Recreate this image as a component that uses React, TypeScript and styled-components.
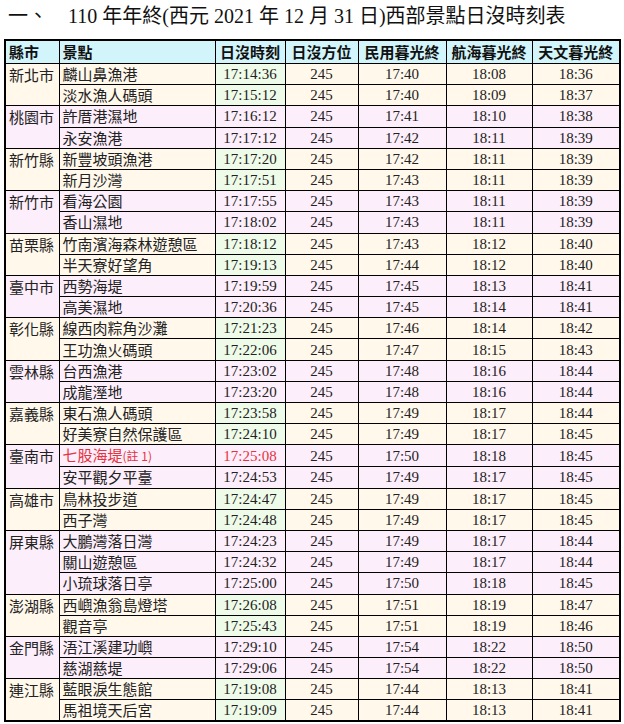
import styled, { createGlobalStyle } from "styled-components";

const GlobalStyle = createGlobalStyle`
  body {
    margin: 0;
    background: #fff;
  }
`;

const Page = styled.div`
  padding: 4px 4px 0 4px;
  width: 615px;
`;

const Title = styled.h1`
  margin: 0 0 0 4px;
  height: 35px;
  font-family: "Liberation Serif", "Noto Sans CJK TC", serif;
  font-weight: normal;
  font-size: 20px;
  line-height: 24px;
  color: #111;
  white-space: pre;
`;

const Table = styled.table`
  border-collapse: collapse;
  table-layout: fixed;
  width: 615px;
  border: 2px solid #000;
`;

const HeadCell = styled.th<{ $left?: boolean }>`
  height: 22px;
  padding: 0 3px;
  border: 1px solid #000;
  background: #d2f5fb;
  font-family: "Noto Sans CJK TC", sans-serif;
  font-size: 15px;
  line-height: 20px;
  font-weight: 700;
  color: #111;
  text-align: ${(p) => (p.$left ? "left" : "center")};
`;

const Row = styled.tr<{ $pink: boolean }>`
  height: 21.2px;
  background: ${(p) => (p.$pink ? "#fdeefb" : "#fff8eb")};
`;

const County = styled.td`
  vertical-align: top;
  padding: 0 3px;
  border: 1px solid #000;
  font-family: "Noto Sans CJK TC", sans-serif;
  font-size: 15px;
  line-height: 21px;
  color: #222;
  white-space: nowrap;
`;

const Spot = styled.td<{ $red?: boolean }>`
  padding: 0 3px;
  border: 1px solid #000;
  font-family: "Noto Sans CJK TC", sans-serif;
  font-size: 15px;
  line-height: 20px;
  color: ${(p) => (p.$red ? "#e5333f" : "#222")};
  white-space: nowrap;
`;

const Note = styled.span`
  font-size: 12px;
`;

const Num = styled.td<{ $green?: boolean; $red?: boolean }>`
  padding: 0;
  border: 1px solid #000;
  text-align: center;
  font-family: "Liberation Serif", serif;
  font-size: 15px;
  line-height: 20px;
  color: ${(p) => (p.$red ? "#e5333f" : "#222")};
  background: ${(p) => (p.$green ? "#effbe9" : "transparent")};
`;

type Spot = {
  name: string;
  time: string;
  civil: string;
  nautical: string;
  astro: string;
  note?: string;
};

type Group = { county: string; spots: Spot[] };

const s = (name: string, time: string, civil: string, nautical: string, astro: string, note?: string): Spot => ({
  name,
  time,
  civil,
  nautical,
  astro,
  note,
});

const groups: Group[] = [
  { county: "新北市", spots: [s("麟山鼻漁港", "17:14:36", "17:40", "18:08", "18:36"), s("淡水漁人碼頭", "17:15:12", "17:40", "18:09", "18:37")] },
  { county: "桃園市", spots: [s("許厝港濕地", "17:16:12", "17:41", "18:10", "18:38"), s("永安漁港", "17:17:12", "17:42", "18:11", "18:39")] },
  { county: "新竹縣", spots: [s("新豐坡頭漁港", "17:17:20", "17:42", "18:11", "18:39"), s("新月沙灣", "17:17:51", "17:43", "18:11", "18:39")] },
  { county: "新竹市", spots: [s("看海公園", "17:17:55", "17:43", "18:11", "18:39"), s("香山濕地", "17:18:02", "17:43", "18:11", "18:39")] },
  { county: "苗栗縣", spots: [s("竹南濱海森林遊憩區", "17:18:12", "17:43", "18:12", "18:40"), s("半天寮好望角", "17:19:13", "17:44", "18:12", "18:40")] },
  { county: "臺中市", spots: [s("西勢海堤", "17:19:59", "17:45", "18:13", "18:41"), s("高美濕地", "17:20:36", "17:45", "18:14", "18:41")] },
  { county: "彰化縣", spots: [s("線西肉粽角沙灘", "17:21:23", "17:46", "18:14", "18:42"), s("王功漁火碼頭", "17:22:06", "17:47", "18:15", "18:43")] },
  { county: "雲林縣", spots: [s("台西漁港", "17:23:02", "17:48", "18:16", "18:44"), s("成龍溼地", "17:23:20", "17:48", "18:16", "18:44")] },
  { county: "嘉義縣", spots: [s("東石漁人碼頭", "17:23:58", "17:49", "18:17", "18:44"), s("好美寮自然保護區", "17:24:10", "17:49", "18:17", "18:45")] },
  { county: "臺南市", spots: [s("七股海堤", "17:25:08", "17:50", "18:18", "18:45", "(註 1)"), s("安平觀夕平臺", "17:24:53", "17:49", "18:17", "18:45")] },
  { county: "高雄市", spots: [s("鳥林投步道", "17:24:47", "17:49", "18:17", "18:45"), s("西子灣", "17:24:48", "17:49", "18:17", "18:45")] },
  {
    county: "屏東縣",
    spots: [
      s("大鵬灣落日灣", "17:24:23", "17:49", "18:17", "18:44"),
      s("關山遊憩區", "17:24:32", "17:49", "18:17", "18:44"),
      s("小琉球落日亭", "17:25:00", "17:50", "18:18", "18:45"),
    ],
  },
  { county: "澎湖縣", spots: [s("西嶼漁翁島燈塔", "17:26:08", "17:51", "18:19", "18:47"), s("觀音亭", "17:25:43", "17:51", "18:19", "18:46")] },
  { county: "金門縣", spots: [s("浯江溪建功嶼", "17:29:10", "17:54", "18:22", "18:50"), s("慈湖慈堤", "17:29:06", "17:54", "18:22", "18:50")] },
  { county: "連江縣", spots: [s("藍眼淚生態館", "17:19:08", "17:44", "18:13", "18:41"), s("馬祖境天后宮", "17:19:09", "17:44", "18:13", "18:41")] },
];

const widths = [54, 156, 70, 73, 88, 86, 88];

export default function App() {
  return (
    <Page>
      <GlobalStyle />
      <Title>{"一、　110 年年終(西元 2021 年 12 月 31 日)西部景點日沒時刻表"}</Title>
      <Table>
        <colgroup>
          {widths.map((w, i) => (
            <col key={i} style={{ width: w }} />
          ))}
        </colgroup>
        <thead>
          <tr>
            <HeadCell $left>縣市</HeadCell>
            <HeadCell $left>景點</HeadCell>
            <HeadCell>日沒時刻</HeadCell>
            <HeadCell>日沒方位</HeadCell>
            <HeadCell>民用暮光終</HeadCell>
            <HeadCell>航海暮光終</HeadCell>
            <HeadCell>天文暮光終</HeadCell>
          </tr>
        </thead>
        <tbody>
          {groups.map((g, gi) => {
            const pink = gi % 2 === 1;
            return g.spots.map((sp, si) => {
              const red = !!sp.note;
              return (
                <Row key={sp.name} $pink={pink}>
                  {si === 0 && <County rowSpan={g.spots.length}>{g.county}</County>}
                  <Spot $red={red}>
                    {sp.name}
                    {sp.note && <Note>{sp.note}</Note>}
                  </Spot>
                  <Num $green={!pink} $red={red}>
                    {sp.time}
                  </Num>
                  <Num>245</Num>
                  <Num>{sp.civil}</Num>
                  <Num>{sp.nautical}</Num>
                  <Num>{sp.astro}</Num>
                </Row>
              );
            });
          })}
        </tbody>
      </Table>
    </Page>
  );
}
